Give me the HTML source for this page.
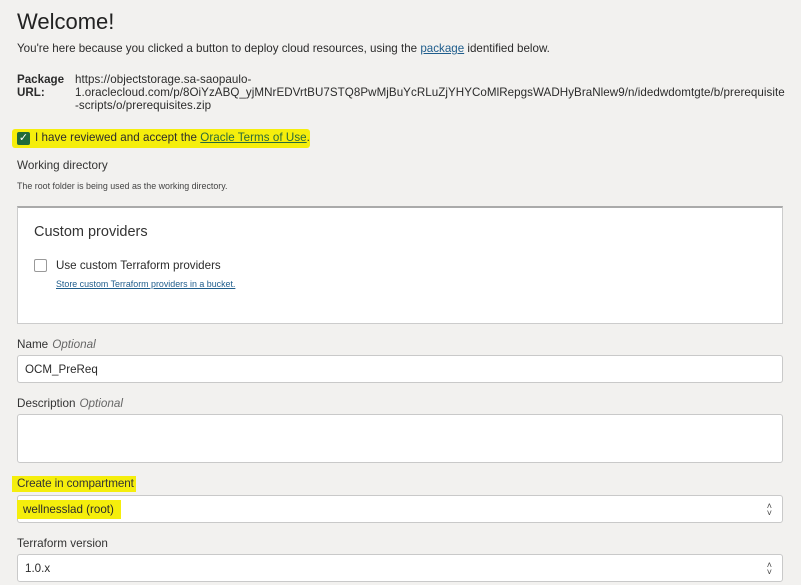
<!DOCTYPE html>
<html><head><style>
body{margin:0;width:801px;height:585px;background:#f2f1ef;font-family:"Liberation Sans",sans-serif;color:#2b2b2b;position:relative;overflow:hidden}
.a{position:absolute;white-space:nowrap}
.lbl{font-size:11.7px;color:#333}
.opt{font-style:italic;color:#666;margin-left:4px}
.in{position:absolute;left:17px;width:766px;background:#fff;border:1px solid #c9c9c9;border-radius:3px;box-sizing:border-box}
.hl{background:#f5ee0c}
a{color:#1f5d8c;text-decoration:underline}
.arr{position:absolute;right:10px;top:7px;font-size:9px;line-height:7px;color:#444;text-align:center}
</style></head><body>
<div class="a" style="left:17px;top:9px;font-size:22px;color:#222">Welcome!</div>
<div class="a" style="left:17px;top:42px;font-size:11.6px">You're here because you clicked a button to deploy cloud resources, using the <a>package</a> identified below.</div>
<div class="a" style="left:17px;top:73px;font-size:11.6px;font-weight:bold;line-height:13px">Package<br>URL:</div>
<div class="a" style="left:75px;top:73px;font-size:11.6px;line-height:13px;letter-spacing:0.05px">https://objectstorage.sa-saopaulo-<br>1.oraclecloud.com/p/8OiYzABQ_yjMNrEDVrtBU7STQ8PwMjBuYcRLuZjYHYCoMlRepgsWADHyBraNlew9/n/idedwdomtgte/b/prerequisite<br>-scripts/o/prerequisites.zip</div>
<div class="a hl" style="left:12px;top:129px;width:298px;height:19px;border-radius:3px"></div>
<div class="a" style="left:17px;top:132px;width:13px;height:13px;background:#1f6b3a;border-radius:2px;color:#fff;font-size:11px;line-height:13px;text-align:center">✓</div>
<div class="a" style="left:35px;top:131px;font-size:11.6px;letter-spacing:0.05px">I have reviewed and accept the <a style="color:#2a6a3a">Oracle Terms of Use</a>.</div>
<div class="a lbl" style="left:17px;top:159px">Working directory</div>
<div class="a" style="left:17px;top:181px;font-size:8.9px;color:#444">The root folder is being used as the working directory.</div>
<div class="a" style="left:17px;top:206px;width:766px;height:118px;background:#fff;border:1px solid #ccc;border-top:2px solid #aaa;box-sizing:border-box"></div>
<div class="a" style="left:34px;top:224px;font-size:14.5px;color:#333">Custom providers</div>
<div class="a" style="left:34px;top:259px;width:13px;height:13px;border:1px solid #999;border-radius:2px;box-sizing:border-box;background:#fff"></div>
<div class="a" style="left:56px;top:259px;font-size:11.6px">Use custom Terraform providers</div>
<div class="a" style="left:56px;top:279px;font-size:8.9px"><a>Store custom Terraform providers in a bucket.</a></div>
<div class="a lbl" style="left:17px;top:338px">Name<span class="opt">Optional</span></div>
<div class="in" style="top:355px;height:28px"><span class="a" style="left:7px;top:7px;font-size:11.6px">OCM_PreReq</span></div>
<div class="a lbl" style="left:17px;top:397px">Description<span class="opt">Optional</span></div>
<div class="in" style="top:414px;height:49px"></div>
<div class="a hl" style="left:12px;top:476px;width:124px;height:16px"></div>
<div class="a lbl" style="left:17px;top:477px;letter-spacing:-0.1px">Create in compartment</div>
<div class="in" style="top:495px;height:28px"><span class="a hl" style="left:-1px;top:4px;width:104px;height:19px"></span><span class="a" style="left:5px;top:7px;font-size:11.6px">wellnesslad (root)</span><div class="arr">˄<br>˅</div></div>
<div class="a lbl" style="left:17px;top:537px">Terraform version</div>
<div class="in" style="top:554px;height:28px"><span class="a" style="left:7px;top:7px;font-size:11.6px">1.0.x</span><div class="arr">˄<br>˅</div></div>
</body></html>
